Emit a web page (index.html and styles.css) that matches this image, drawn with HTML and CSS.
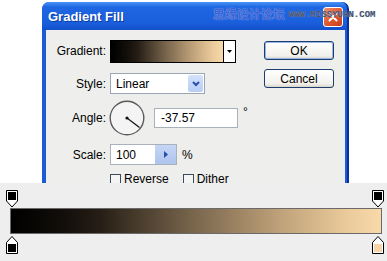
FILE: index.html
```html
<!DOCTYPE html>
<html lang="en">

<head>
    <meta charset="UTF-8">
    <meta name="viewport" content="width=device-width, initial-scale=1.0">
    <title>Gradient Fill</title>
    <link rel="stylesheet" href="styles.css">
</head>

<body>
    <div class="desk">
        <div class="dialog">
            <div class="titlebar">
                <span class="title">Gradient Fill</span>
                <span class="close">
                    <svg width="10" height="10" viewBox="0 0 10 10">
                        <path d="M1.5 1.5 L8.5 8.5 M8.5 1.5 L1.5 8.5" stroke="#fff" stroke-width="2" stroke-linecap="round" />
                    </svg>
                </span>
            </div>
            <div class="panel">
                <div class="form">
                    <div class="row row-gradient">
                        <label>Gradient:</label>
                        <div class="swatch">
                            <div class="swatch-fill"></div>
                            <div class="swatch-arrow">
                                <svg width="5" height="3" viewBox="0 0 5 3"><path d="M0 0 H5 L2.5 3 Z" fill="#000" /></svg>
                            </div>
                        </div>
                    </div>
                    <div class="row row-style">
                        <label>Style:</label>
                        <div class="select">
                            <span>Linear</span>
                            <span class="select-btn">
                                <svg width="8" height="6" viewBox="0 0 8 6"><path d="M1 1 L4 4 L7 1" stroke="#2a4fa8" stroke-width="2" fill="none" /></svg>
                            </span>
                        </div>
                    </div>
                    <div class="row row-angle">
                        <label>Angle:</label>
                        <div class="dial">
                            <svg width="36" height="36" viewBox="0 0 36 36">
                                <circle cx="18" cy="18" r="16.8" fill="#f4f4f4" stroke="#5a5a5a" stroke-width="1.4" />
                                <line x1="18" y1="18" x2="30.5" y2="27.6" stroke="#111" stroke-width="1.2" />
                                <circle cx="18" cy="18" r="1.6" fill="#111" />
                            </svg>
                        </div>
                        <div class="field angle-field">-37.57</div>
                        <span class="unit deg">°</span>
                    </div>
                    <div class="row row-scale">
                        <label>Scale:</label>
                        <div class="field scale-field">
                            <span class="scale-val">100</span>
                            <span class="scale-btn">
                                <svg width="4" height="7" viewBox="0 0 4 7"><path d="M0 0 L4 3.5 L0 7 Z" fill="#2a4fa8" /></svg>
                            </span>
                        </div>
                        <span class="unit">%</span>
                    </div>
                    <div class="row row-checks">
                        <span class="check"><span class="box"></span>Reverse</span>
                        <span class="check"><span class="box"></span>Dither</span>
                    </div>
                </div>
                <div class="buttons">
                    <button class="btn btn-ok">OK</button>
                    <button class="btn">Cancel</button>
                </div>
            </div>
        </div>
        <div class="watermark">
            <span class="wm-cn">思缘设计论坛</span>
            <span class="wm-en">WWW.MISSYUAN.COM</span>
        </div>
    </div>

    <!-- gradient editor strip -->
    <div class="editor">
        <div class="stops">
            <svg class="stop" width="12" height="18" viewBox="0 0 12 18">
                <path d="M0.5 0.5 H11.5 V11 L6 17 L0.5 11 Z" fill="#fff" stroke="#000" />
                <rect x="2" y="2" width="8" height="8" fill="#000" />
            </svg>
            <svg class="stop" width="12" height="18" viewBox="0 0 12 18">
                <path d="M0.5 0.5 H11.5 V11 L6 17 L0.5 11 Z" fill="#fff" stroke="#000" />
                <rect x="2" y="2" width="8" height="8" fill="#000" />
            </svg>
        </div>
        <div class="bar"></div>
        <div class="stops stops-bottom">
            <svg class="stop" width="12" height="18" viewBox="0 0 12 18">
                <path d="M6 0.5 L11.5 6.5 V17.5 H0.5 V6.5 Z" fill="#fff" stroke="#000" />
                <rect x="2" y="8" width="8" height="8" fill="#000" />
            </svg>
            <svg class="stop" width="12" height="18" viewBox="0 0 12 18">
                <path d="M6 0.5 L11.5 6.5 V17.5 H0.5 V6.5 Z" fill="#fff" stroke="#000" />
                <rect x="2" y="8" width="8" height="8" fill="#f6d6a8" />
            </svg>
        </div>
    </div>
</body>

</html>
```

FILE: styles.css
```css
* {
    box-sizing: border-box;
}

body {
    margin: 0;
    padding: 0;
    background-color: #fff;
    font-family: "Liberation Sans", Arial, sans-serif;
    font-size: 12px;
    color: #000;
}

/* top area with the dialog */
.desk {
    position: relative;
    height: 183px;
    overflow: hidden;
    padding: 2px 0 0 42px;
}

.dialog {
    width: 307px;
    height: 200px;
    background-color: #1b5bd6;
    border-radius: 7px 7px 0 0;
    border-right: 2px solid #0b2f9a;
}

.titlebar {
    height: 28px;
    display: flex;
    align-items: center;
    justify-content: space-between;
    padding: 0 4px 0 6px;
    border-radius: 7px 7px 0 0;
    background: linear-gradient(#4a94f6, #1f66e2 18%, #1a5edc 75%, #114fcb);
}

.title {
    color: #fff;
    font-weight: bold;
    font-size: 13px;
    text-shadow: 1px 1px 0 #0b3a9e;
}

.close {
    width: 20px;
    height: 20px;
    margin-top: 2px;
    border: 1px solid #fff;
    border-radius: 3px;
    background: linear-gradient(135deg, #f0906a, #e05a30 50%, #c8401c);
    display: flex;
    align-items: center;
    justify-content: center;
}

.panel {
    height: 172px;
    margin-left: 4px;
    margin-right: 2px;
    background-color: #eeeeec;
    padding-top: 10px;
    display: flex;
}

/* form column */
.form {
    width: 214px;
}

.row {
    display: flex;
    align-items: center;
}

.row label {
    width: 60px;
    text-align: right;
    margin-right: 4px;
}

.row-gradient {
    height: 22px;
}

.row-style {
    height: 21px;
    margin-top: 11px;
}

.row-angle {
    height: 37px;
    margin-top: 5px;
}

.row-scale {
    height: 21px;
    margin-top: 8px;
}

.row-checks {
    margin-top: 7px;
    padding-left: 64px;
}

.swatch {
    display: flex;
    width: 126px;
    height: 23px;
    border: 1px solid #000;
}

.swatch-fill {
    flex: 1;
    background: linear-gradient(to right, #000 0%, #120e0a 14%, #261e16 24%, #6e5d46 46%, #c0a27a 73%, #ebcb9c 91%, #f8d9a9 100%);
    border-right: 1px solid #000;
}

.swatch-arrow {
    width: 11px;
    background-color: #fff;
    display: flex;
    align-items: center;
    justify-content: center;
}

.select {
    width: 95px;
    height: 21px;
    border: 1px solid #9aa6b6;
    background-color: #fff;
    display: flex;
    align-items: center;
    justify-content: space-between;
    padding: 1px 1px 1px 5px;
}

.select-btn {
    width: 15px;
    height: 17px;
    background: linear-gradient(#d4e1fb, #b9cdf5);
    border-radius: 2px;
    display: flex;
    align-items: center;
    justify-content: center;
}

.dial {
    width: 36px;
    height: 36px;
    margin-left: -1px;
}

.field {
    height: 20px;
    border: 1px solid #a9b1bb;
    background-color: #fff;
    display: flex;
    align-items: center;
}

.angle-field {
    width: 84px;
    margin-left: 9px;
    padding-left: 6px;
}

.unit {
    margin-left: 5px;
}

.deg {
    align-self: flex-start;
    margin-top: 6px;
}

.scale-field {
    width: 67px;
    height: 21px;
    justify-content: space-between;
    padding-left: 5px;
}

.scale-btn {
    width: 21px;
    height: 19px;
    background: linear-gradient(#c6d6f6, #aec4ee);
    display: flex;
    align-items: center;
    justify-content: center;
}

.check {
    display: inline-flex;
    align-items: center;
    margin-right: 14px;
}

.box {
    width: 11px;
    height: 11px;
    border: 1px solid #3c4a5e;
    background-color: #f4f4f4;
    margin-right: 3px;
}

/* OK / Cancel */
.buttons {
    display: flex;
    flex-direction: column;
    padding-top: 1px;
    margin-left: 4px;
}

.btn {
    width: 70px;
    height: 19px;
    margin-bottom: 9px;
    padding: 0;
    font-family: "Liberation Sans", Arial, sans-serif;
    font-size: 12px;
    color: #000;
    border: 1px solid #1c3d6e;
    border-radius: 3px;
    background: linear-gradient(#ffffff, #f2f1ec 80%, #d8d4ca);
}

.btn-ok {
    box-shadow: inset 0 0 0 1px #9ab6e6;
}

/* watermark over the title bar */
.watermark {
    position: absolute;
    left: 213px;
    top: 7px;
    display: flex;
    align-items: flex-end;
    gap: 4px;
}

.wm-cn {
    font-family: "Noto Sans CJK SC", sans-serif;
    font-size: 12px;
    font-weight: bold;
    color: #3a62d0;
    line-height: 14px;
    text-shadow: 0 0 1px #b8d0ff;
}

.wm-en {
    font-family: "Liberation Mono", monospace;
    font-size: 9px;
    font-weight: bold;
    line-height: 11px;
    color: #4e5364;
    text-shadow: 0 0 1px #9ab4ee;
}

/* gradient editor strip */
.editor {
    height: 78px;
    background-color: #eeeeee;
    padding: 7px 3px 0 6px;
}

.stops {
    display: flex;
    justify-content: space-between;
    height: 18px;
}

.stops-bottom {
    margin-top: 2px;
}

.stop {
    display: block;
}

.bar {
    height: 26px;
    margin: 0 2px 0 4px;
    border: 1px solid #6a6a6a;
    background: linear-gradient(to right, #000 0%, #120e0a 14%, #261e16 24%, #6e5d46 46%, #c0a27a 73%, #ebcb9c 91%, #f8d9a9 100%);
}
```
